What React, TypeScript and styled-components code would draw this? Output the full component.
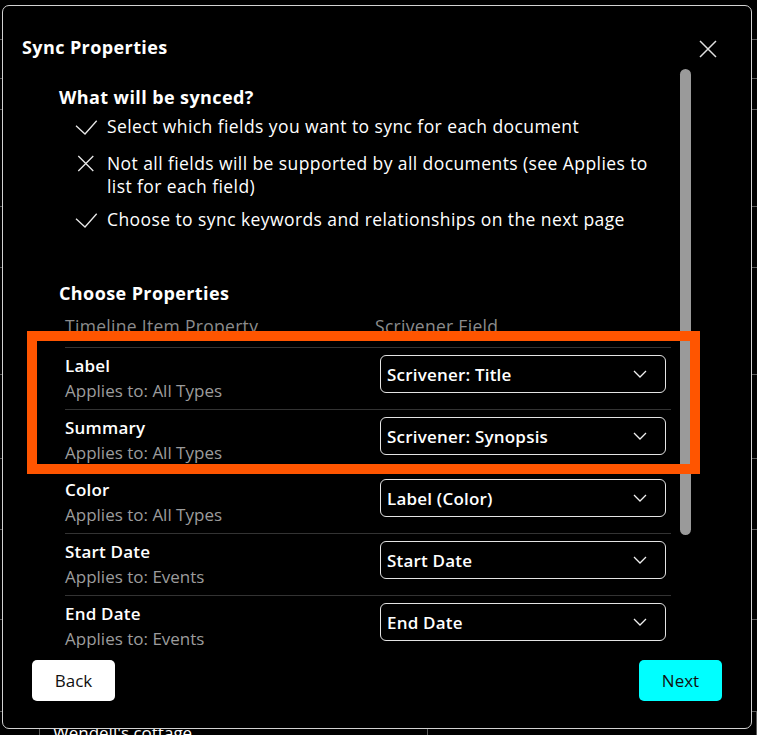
import React from "react";
import styled, { createGlobalStyle } from "styled-components";

const GlobalStyle = createGlobalStyle`
  html, body {
    margin: 0;
    padding: 0;
    background: #000;
  }
  body {
    font-family: "Open Sans", "Noto Sans", sans-serif;
    color: #fff;
  }
  * {
    box-sizing: border-box;
  }
`;

const Page = styled.div`
  position: relative;
  width: 100%;
  height: 735px;
  overflow: hidden;
  background: #000;
`;

/* the app sheet behind the dialog */
const Sheet = styled.div`
  display: flex;
  flex-direction: column;
`;

const SheetRow = styled.div<{ $h: number }>`
  height: ${(p) => p.$h}px;
  border-bottom: 1px solid #5a5a5a;
`;

const SheetLastRow = styled.div`
  display: grid;
  grid-template-columns: 40px 388px 1fr;
  height: 60px;
`;

const SheetCell = styled.div`
  border-right: 1px solid #5a5a5a;
  padding: 9px 0 0 13px;
  font-size: 17px;
  font-weight: 500;
  line-height: 24px;
  color: #fff;
  white-space: nowrap;
`;

const Dialog = styled.div`
  position: absolute;
  left: 2px;
  top: 5px;
  width: 750px;
  height: 724px;
  border: 1px solid #d2d2d2;
  border-radius: 7px;
  background: #000;
  display: flex;
  flex-direction: column;
  z-index: 1;
`;

const Header = styled.div`
  display: flex;
  justify-content: space-between;
  align-items: flex-start;
  padding: 29px 34px 0 19px;
  margin-bottom: 10px;
`;

const Title = styled.h1`
  margin: 0;
  font-size: 18px;
  font-weight: 700;
  letter-spacing: 0.4px;
  line-height: 24px;
  color: #fff;
`;

const CloseButton = styled.button`
  margin-top: 5px;
  width: 18px;
  height: 18px;
  padding: 0;
  border: none;
  background: none;
  cursor: pointer;
  display: block;
`;

const BodyFrame = styled.div`
  flex: 1;
  min-height: 0;
  display: flex;
  margin: 0 60px 0 19px;
`;

const Body = styled.div`
  flex: 1;
  min-width: 0;
  overflow: hidden;
  padding: 16px 9px 0 37px;
`;

const ScrollTrack = styled.div`
  flex: none;
  width: 11px;
`;

const ScrollThumb = styled.div`
  height: 466px;
  border-radius: 6px;
  background: #9a9a9a;
`;

const SectionTitle = styled.h2<{ $top?: number }>`
  margin: ${(p) => p.$top ?? 0}px 0 0;
  font-size: 18px;
  font-weight: 700;
  letter-spacing: 0.4px;
  line-height: 24px;
  color: #fff;
`;

const InfoList = styled.ul`
  list-style: none;
  margin: 6px 0 0;
  padding: 0 0 0 15px;
`;

const InfoItem = styled.li<{ $after: number }>`
  display: flex;
  align-items: flex-start;
  margin-bottom: ${(p) => p.$after}px;
`;

const InfoIcon = styled.svg`
  flex: none;
  width: 24px;
  height: 23px;
  margin-right: 9px;
`;

const InfoText = styled.span`
  font-size: 17.5px;
  letter-spacing: 0.42px;
  line-height: 23px;
  color: #fff;
`;

const Table = styled.div`
  margin: 9px 0 0 6px;
`;

const TableHead = styled.div`
  display: grid;
  grid-template-columns: 310px 1fr;
  padding-bottom: 9px;
  font-size: 17.5px;
  letter-spacing: 0.3px;
  line-height: 24px;
  color: #8c8c8c;
`;

const Row = styled.div`
  display: grid;
  grid-template-columns: 310px 1fr;
  align-items: start;
  border-top: 1px solid #333;
  padding: 5px 0 6px;
`;

const PropName = styled.div`
  font-size: 17px;
  font-weight: 600;
  letter-spacing: 0.2px;
  line-height: 25px;
  color: #fff;
`;

const PropNote = styled.div`
  font-size: 17px;
  line-height: 25px;
  color: #9c9c9c;
`;

const FieldSelect = styled.button`
  margin: 2px 5px 0;
  height: 38px;
  width: calc(100% - 10px);
  display: flex;
  align-items: center;
  justify-content: space-between;
  padding: 0 18px 0 6px;
  border: 1px solid #e4e4e4;
  border-radius: 6px;
  background: transparent;
  color: #fff;
  font-family: inherit;
  font-size: 17px;
  font-weight: 600;
  letter-spacing: 0.2px;
  cursor: pointer;
`;

const Footer = styled.div`
  display: flex;
  justify-content: space-between;
  padding: 12px 29px 27px;
`;

const FooterButton = styled.button<{ $primary?: boolean }>`
  width: 83px;
  height: 41px;
  border: none;
  border-radius: 5px;
  background: ${(p) => (p.$primary ? "#00ffff" : "#fff")};
  color: #111;
  font-family: inherit;
  font-size: 17px;
  font-weight: 400;
  cursor: pointer;
`;

const Highlight = styled.div`
  position: absolute;
  left: 27px;
  top: 331px;
  width: 673px;
  height: 143px;
  border: 10px solid #ff5500;
  pointer-events: none;
  z-index: 2;
`;

const CheckIcon = () => (
  <InfoIcon viewBox="0 0 24 23">
    <polyline
      points="2,10.7 11,19 22.7,5.7"
      fill="none"
      stroke="#e8e8e8"
      strokeWidth="1.3"
    />
  </InfoIcon>
);

const CrossIcon = () => (
  <InfoIcon viewBox="0 0 24 23">
    <path
      d="M4.3 4 L19.3 19 M19.3 4 L4.3 19"
      fill="none"
      stroke="#e8e8e8"
      strokeWidth="1.3"
    />
  </InfoIcon>
);

const Chevron = () => (
  <svg width="14" height="8" viewBox="0 0 14 8">
    <polyline
      points="1,1 7,7 13,1"
      fill="none"
      stroke="#f0f0f0"
      strokeWidth="1.3"
    />
  </svg>
);

const properties = [
  { name: "Label", appliesTo: "All Types", field: "Scrivener: Title" },
  { name: "Summary", appliesTo: "All Types", field: "Scrivener: Synopsis" },
  { name: "Color", appliesTo: "All Types", field: "Label (Color)" },
  { name: "Start Date", appliesTo: "Events", field: "Start Date" },
  { name: "End Date", appliesTo: "Events", field: "End Date" },
  { name: "Notes", appliesTo: "All Types", field: "Scrivener: Notes" },
  { name: "Status", appliesTo: "All Types", field: "Status" },
];

const sheetRows = [40, 39, 31, 97, 61, 107, 84, 71, 90, 92];

export default function App() {
  return (
    <>
      <GlobalStyle />
      <Page>
        <Sheet>
          {sheetRows.map((h, i) => (
            <SheetRow key={i} $h={h} />
          ))}
          <SheetLastRow>
            <SheetCell />
            <SheetCell>Wendell's cottage</SheetCell>
            <SheetCell />
          </SheetLastRow>
        </Sheet>

        <Dialog>
          <Header>
            <Title>Sync Properties</Title>
            <CloseButton aria-label="Close">
              <svg width="18" height="18" viewBox="0 0 18 18">
                <path
                  d="M1 1 L17 17 M17 1 L1 17"
                  stroke="#e0e0e0"
                  strokeWidth="1.5"
                  fill="none"
                />
              </svg>
            </CloseButton>
          </Header>

          <BodyFrame>
            <Body>
              <SectionTitle>What will be synced?</SectionTitle>
              <InfoList>
                <InfoItem $after={14}>
                  <CheckIcon />
                  <InfoText>Select which fields you want to sync for each document</InfoText>
                </InfoItem>
                <InfoItem $after={10}>
                  <CrossIcon />
                  <InfoText>
                    Not all fields will be supported by all documents (see Applies to
                    list for each field)
                  </InfoText>
                </InfoItem>
                <InfoItem $after={0}>
                  <CheckIcon />
                  <InfoText>Choose to sync keywords and relationships on the next page</InfoText>
                </InfoItem>
              </InfoList>

              <SectionTitle $top={50}>Choose Properties</SectionTitle>
              <Table>
                <TableHead>
                  <div>Timeline Item Property</div>
                  <div>Scrivener Field</div>
                </TableHead>
                {properties.map((p) => (
                  <Row key={p.name}>
                    <div>
                      <PropName>{p.name}</PropName>
                      <PropNote>Applies to: {p.appliesTo}</PropNote>
                    </div>
                    <FieldSelect>
                      <span>{p.field}</span>
                      <Chevron />
                    </FieldSelect>
                  </Row>
                ))}
              </Table>
            </Body>
            <ScrollTrack>
              <ScrollThumb />
            </ScrollTrack>
          </BodyFrame>

          <Footer>
            <FooterButton>Back</FooterButton>
            <FooterButton $primary>Next</FooterButton>
          </Footer>
        </Dialog>

        <Highlight />
      </Page>
    </>
  );
}
